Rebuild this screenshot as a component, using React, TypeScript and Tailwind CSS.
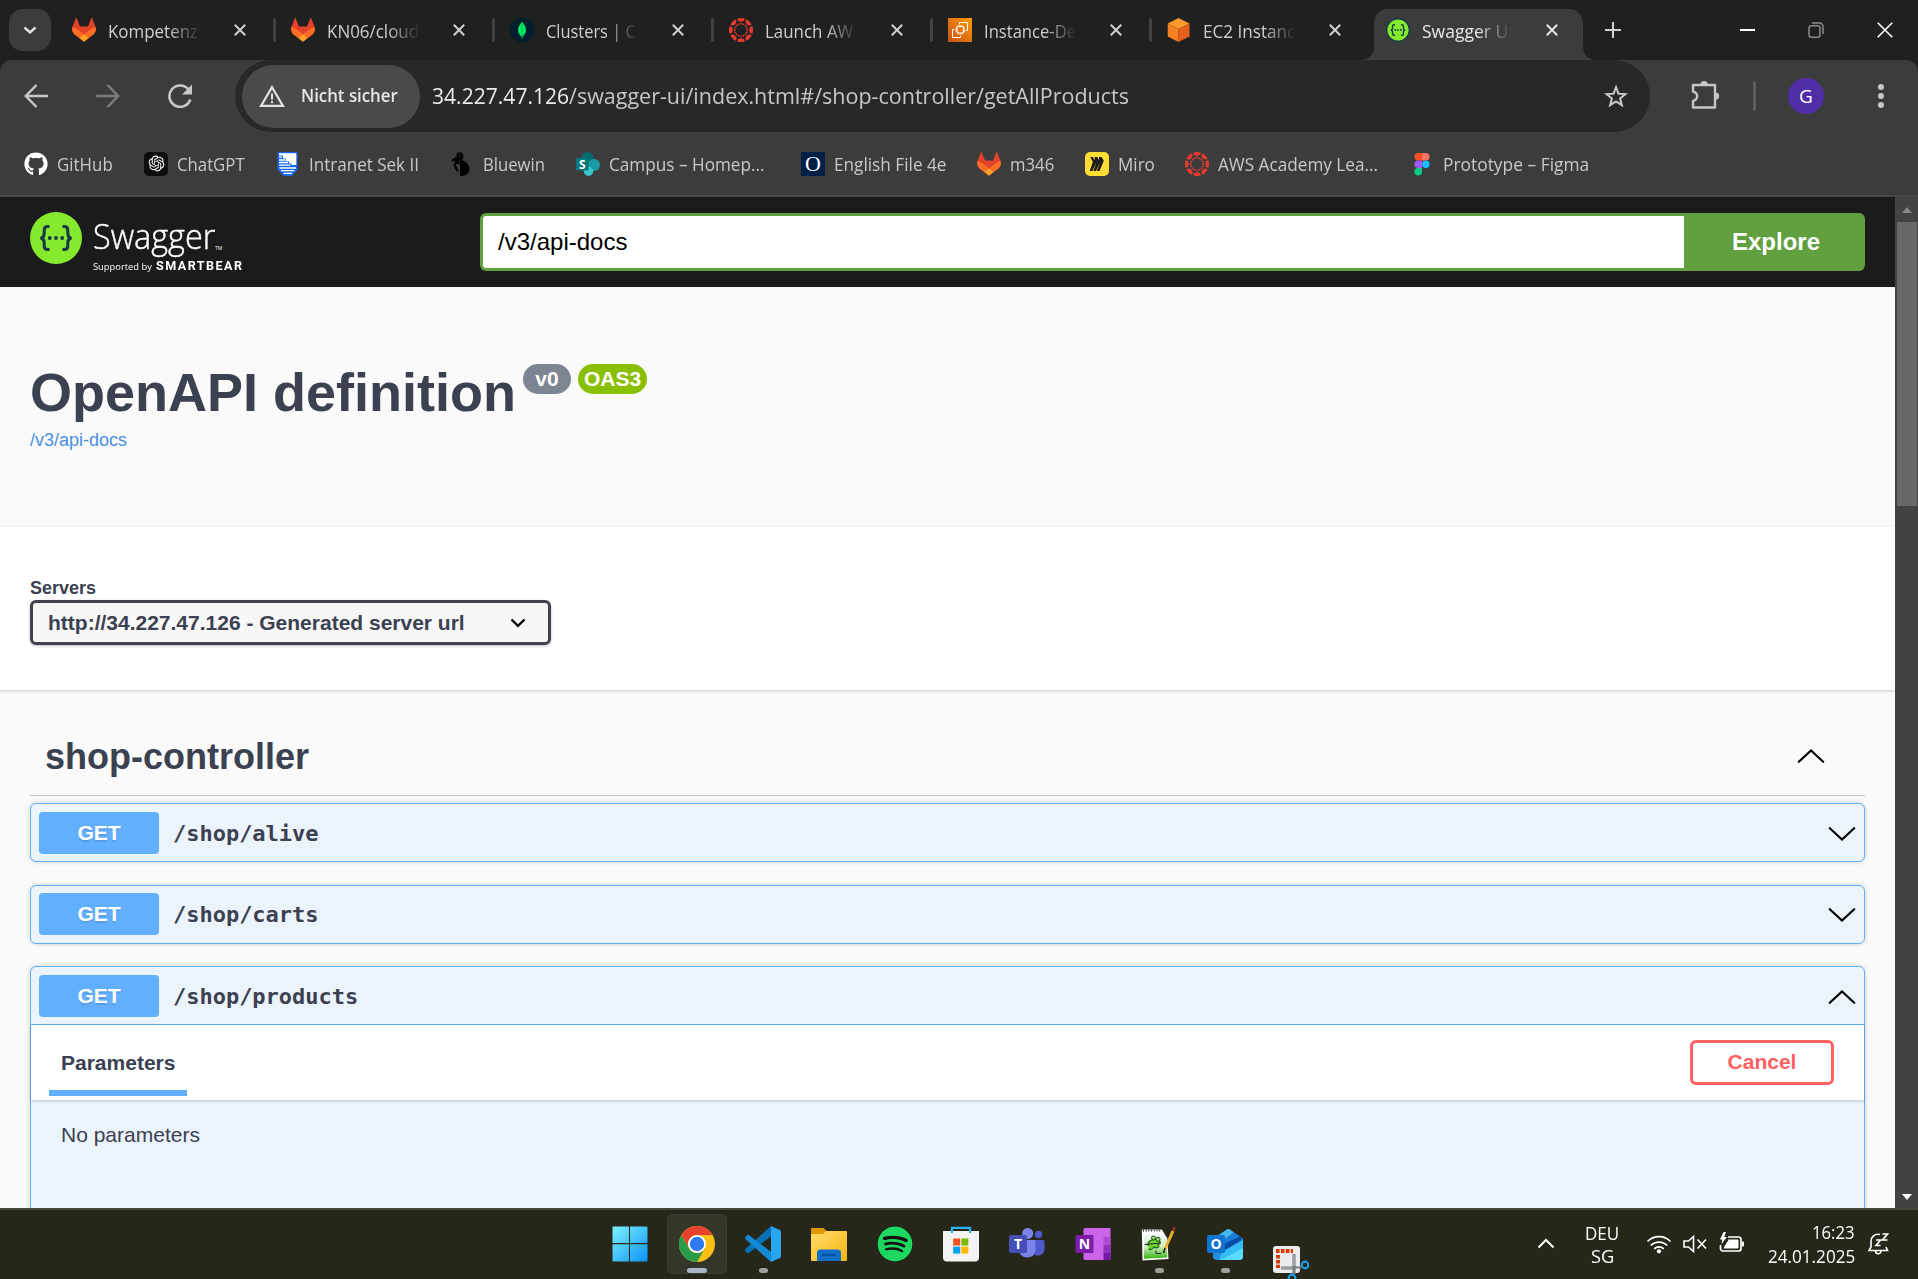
import React, { useLayoutEffect, useRef, useState } from "react";
import { FaGithub, FaSpotify } from "react-icons/fa";
import { RiOpenaiFill } from "react-icons/ri";

/* Text squeezed horizontally so that it fills exactly `w` pixels. */
function Fit({ w, children, className = "" }: { w: number; children: React.ReactNode; className?: string }) {
  const ref = useRef<HTMLSpanElement>(null);
  const [scale, setScale] = useState(1);
  useLayoutEffect(() => {
    if (ref.current) setScale(w / ref.current.offsetWidth);
  }, [w]);
  return (
    <span className={`inline-block shrink-0 whitespace-nowrap ${className}`} style={{ width: w }}>
      <span ref={ref} className="inline-block origin-left" style={{ transform: `scaleX(${scale})` }}>
        {children}
      </span>
    </span>
  );
}

/* ---------- favicons ---------- */
const Gitlab = () => (
  <svg viewBox="0 0 24 24" className="h-6 w-6 shrink-0">
    <path d="M4.7.3 8 8.6h8L19.300.3c.2-.4.7-.4.9 0l3.300 8.700c1 3-.1 6-2.400 7.800L12 23.700 2.900 16.800C.6 15-.5 12 .5 9L3.800.3c.2-.4.7-.4.9 0Z" fill="#e24329" />
    <path d="m23.500 9-.1-.1c-1.600.300-3 1-4.300 2L12 16.200l4.600 3.900 4.500-3.300C23.400 15 24.500 12 23.500 9ZM.5 9l.1-.1c1.600.300 3 1 4.300 2l7.100 5.300-4.600 3.900-4.500-3.300C.6 15-.5 12 .5 9Z" fill="#fc6d26" />
    <path d="m12 16.200 4.600 3.700L12 23.700l-4.600-3.800Z" fill="#fca326" />
  </svg>
);

const Mongo = () => (
  <svg viewBox="0 0 24 24" className="h-6 w-6 shrink-0">
    <circle cx="12" cy="12" r="12" fill="#001e2b" />
    <path d="M12 3.500c-.5 1.500-3.900 4-3.900 8.500 0 3.500 2.300 5.900 3.500 6.800l.2 2.200h.5l.2-2.200c1.200-1 3.500-3.200 3.500-6.800 0-4.500-3.400-7-4-8.500Z" fill="#00ed64" />
    <path d="M12 5v14" stroke="#00a64b" strokeWidth=".8" />
  </svg>
);

const CANVAS_ANGLES = [0, 45, 90, 135, 180, 225, 270, 315];
const Canvas = () => (
  <svg viewBox="0 0 24 24" className="h-6 w-6 shrink-0" fill="#ea3a2f">
    {CANVAS_ANGLES.map((a) => (
      <g key={a} transform={`rotate(${a} 12 12)`}>
        <path d="M8.300.6a12 12 0 0 1 7.400 0 3.700 3.200 0 0 1-7.400 0Z" />
        <circle cx="12" cy="5.700" r=".9" />
      </g>
    ))}
    {CANVAS_ANGLES.map((a) => (
      <circle key={a} cx="12" cy="5.800" r=".9" transform={`rotate(${a + 22.5} 12 12)`} />
    ))}
  </svg>
);

const Ec2 = () => (
  <svg viewBox="0 0 24 24" className="h-6 w-6 shrink-0" fill="none">
    <defs>
      <linearGradient id="ec2" x1="0" y1="1" x2="1" y2="0">
        <stop stopColor="#c8511b" />
        <stop offset="1" stopColor="#f90" />
      </linearGradient>
    </defs>
    <path d="M0 0h24v24H0z" fill="url(#ec2)" />
    <path d="M11.500 6.500V4.500H19.500V12.500H17.500M6.500 11.500H4.500v8H12.500V17.500" stroke="#fff" strokeWidth="1" />
    <rect x="9" y="8.500" width="6.500" height="6.500" rx=".8" stroke="#fff" strokeWidth="1.200" />
    <path d="M10.700 8.500V7M12.300 8.500V7M13.900 8.500V7M10.700 16.500V15M12.300 16.500V15M13.900 16.500V15M7.500 10.200H9M7.500 11.800H9M7.500 13.400H9M15.500 10.200H17M15.500 11.800H17M15.500 13.400H17" stroke="#fff" strokeWidth=".8" />
  </svg>
);

const Cube = () => (
  <svg viewBox="0 0 24 24" className="h-6 w-6 shrink-0">
    <path d="M11.500 0 22.500 5.500 11.500 11 .7 5.500Z" fill="#fb9a2a" />
    <path d="M.7 5.500 11.500 11V24L.7 18.500Z" fill="#f58220" />
    <path d="M22.500 5.500 11.500 11V24l11-5.500Z" fill="#e65f1c" />
  </svg>
);

const SwaggerMark = ({ className, ring }: { className: string; ring?: boolean }) => (
  <svg viewBox="0 0 52 52" className={className} fill="none">
    <circle cx="26" cy="26" r={ring ? 24.500 : 26} fill="#85ea2d" stroke={ring ? "#173647" : "none"} strokeWidth={ring ? 3 : 0} />
    <g stroke="#173647" strokeWidth="3">
      <path d="M19.500 14.500h-1.700c-2.500 0-3.600 1.300-3.600 3.600v3.400c0 2.600-.9 4.100-3.700 4.500 2.800.4 3.700 1.900 3.700 4.500v3.400c0 2.300 1.100 3.600 3.600 3.600h1.700" />
      <path d="M32.500 14.500h1.700c2.500 0 3.600 1.300 3.600 3.600v3.400c0 2.600.9 4.100 3.700 4.500-2.800.4-3.700 1.900-3.700 4.500v3.400c0 2.300-1.100 3.600-3.600 3.600h-1.700" />
    </g>
    <g fill="#173647">
      <circle cx="19.800" cy="26" r="1.900" />
      <circle cx="26" cy="26" r="1.900" />
      <circle cx="32.200" cy="26" r="1.900" />
    </g>
  </svg>
);

const CloseX = ({ light }: { light?: boolean }) => (
  <svg viewBox="0 0 12 12" className="h-3 w-3 shrink-0" fill="none">
    <path d="m.8.8 10.400 10.400M11.200.8.800 11.200" stroke={light ? "#e3e3e3" : "#d0d0d0"} strokeWidth="2" />
  </svg>
);

/* ---------- tab strip ---------- */
const tabs = [
  { icon: <Gitlab />, label: "Kompetenz", w: 90 },
  { icon: <Gitlab />, label: "KN06/cloud", w: 92 },
  { icon: <Mongo />, label: "Clusters | C", w: 90 },
  { icon: <Canvas />, label: "Launch AW", w: 88 },
  { icon: <Ec2 />, label: "Instance-De", w: 92 },
  { icon: <Cube />, label: "EC2 Instanc", w: 92 },
];

function TabStrip() {
  return (
    <div className="flex h-[60px] shrink-0 bg-[#1f2120]">
      <div className="w-[55px] shrink-0 pt-[9px] pl-[9px]">
        <div className="flex h-[42px] w-[42px] items-center justify-center rounded-[14px] bg-[#3c3c3c]">
          <svg viewBox="0 0 14 9" className="h-[9px] w-[14px]" fill="none">
            <path d="m1.500 1.500 5.500 5 5.500-5" stroke="#e3e3e3" strokeWidth="2.400" />
          </svg>
        </div>
      </div>
      {tabs.map((t, i) => (
        <div key={i} className="flex h-[60px] w-[219px] shrink-0 items-center pl-[17px]">
          {t.icon}
          <div className="ml-3 w-[93px] shrink-0 pt-[2px] text-[17.500px] leading-6 text-[#cfcfcf] [mask-image:linear-gradient(to_right,#000_60px,transparent_93px)]">
            <Fit w={t.w}>{t.label}</Fit>
          </div>
          <div className="ml-[33px] flex w-3 shrink-0">
            <CloseX />
          </div>
          {i < 5 && <div className="mr-[-3px] ml-[27px] h-6 w-[3px] shrink-0 rounded bg-[#424242]" />}
        </div>
      ))}
      <div className="relative flex h-[60px] w-[219px] shrink-0 items-center pl-[17px]">
        <svg viewBox="0 0 236 51" className="absolute top-[9px] left-[-9px] h-[51px] w-[236px]" fill="#3c3c3c">
          <path d="M0 51c9 0 14-6 14-14V15C14 6 20 0 28 0h181c8 0 14 6 14 15v22c0 8 5 14 13 14Z" />
        </svg>
        <SwaggerMark ring className="relative h-6 w-6 shrink-0" />
        <div className="relative ml-3 w-[92px] shrink-0 pt-[2px] text-[17.500px] leading-6 text-[#e8e8e8] [mask-image:linear-gradient(to_right,#000_55px,transparent_90px)]">
          <Fit w={91}>Swagger UI</Fit>
        </div>
        <div className="relative ml-[32px] flex w-3 shrink-0">
          <CloseX light />
        </div>
      </div>
      <div className="flex flex-1 items-center">
        <svg viewBox="0 0 16 16" className="ml-[17px] h-4 w-4" fill="none">
          <path d="M8 0v16M0 8h16" stroke="#d0d0d0" strokeWidth="2" />
        </svg>
        <div className="mt-[-1px] ml-[119px] h-[2px] w-[15px] bg-white" />
        <svg viewBox="0 0 16 16" className="ml-[53px] h-4 w-4" fill="none" stroke="#8a8a8a" strokeWidth="1.500">
          <rect x="1" y="3.800" width="11" height="11.400" rx="2.200" />
          <path d="M4 1h7.500A3.500 3.500 0 0 1 15 4.500V12" />
        </svg>
        <svg viewBox="0 0 16 16" className="ml-[53px] h-4 w-4" fill="none">
          <path d="m.7.7 14.600 14.600M15.300.7.700 15.300" stroke="#fff" strokeWidth="1.600" />
        </svg>
      </div>
    </div>
  );
}

/* ---------- toolbar ---------- */
function Toolbar() {
  return (
    <div className="shrink-0 bg-[#1f2120]">
      <div className="flex h-[72px] items-center rounded-t-[12px] bg-[#3c3c3c]">
        <svg viewBox="0 0 24 24" className="ml-6 h-6 w-6" fill="none" stroke="#c7c7c7" strokeWidth="2.500">
          <path d="M24 12H2M12.500 1 1.800 12l10.700 11" />
        </svg>
        <svg viewBox="0 0 24 24" className="ml-12 h-6 w-6" fill="none" stroke="#7c7c7c" strokeWidth="2.500">
          <path d="M0 12h22M11.500 1l10.700 11-10.700 11" />
        </svg>
        <svg viewBox="0 0 24 24" className="ml-12 h-6 w-6" fill="none">
          <path d="M22.300 15.500A10.700 10.700 0 1 1 20.500 5.500" stroke="#c7c7c7" strokeWidth="2.600" />
          <path d="M24 .5V10.500H14Z" fill="#c7c7c7" />
        </svg>
        <div className="ml-[43px] flex h-[72px] w-[1415px] items-center rounded-full bg-[#282828] pl-[7px]">
          <div className="flex h-[63px] w-[178px] items-center rounded-full bg-[#4a4a4a] pl-[17px]">
            <svg viewBox="0 0 26 24" className="h-6 w-[26px]" fill="none">
              <path d="M13 3.200 24 21.900H2Z" stroke="#e3e3e3" strokeWidth="2.200" />
              <path d="M13 9.500v6M13 17v2.300" stroke="#e3e3e3" strokeWidth="2" />
            </svg>
            <Fit w={97} className="mt-[-1px] ml-4 text-[17.500px] font-semibold text-[#e8e8e8]">Nicht sicher</Fit>
          </div>
          <Fit w={137} className="mt-[-2px] ml-3 text-[22px] leading-8 text-[#ececec]">34.227.47.126</Fit>
          <Fit w={560} className="mt-[-2px] text-[22px] leading-8 text-[#c7c7c7]">/swagger-ui/index.html#/shop-controller/getAllProducts</Fit>
          <svg viewBox="0 0 24 24" className="ml-auto mr-[22px] h-6 w-6" fill="none" stroke="#c7c7c7" strokeWidth="2">
            <path d="m12 3.200 2.500 6.500 7 .4-5.400 4.400 1.800 6.700-5.900-3.800-5.900 3.800 1.800-6.700L2.500 10.100l7-.4Z" />
          </svg>
        </div>
        <svg viewBox="0 0 30 30" className="mt-[-2px] ml-[40px] h-[30px] w-[30px]" fill="none">
          <path d="M3 5h22v22.500H3v-6.500c5.500-1.500 5.500-8 0-9.500Z" stroke="#c7c7c7" strokeWidth="2.400" strokeLinejoin="round" />
          <path d="M10.500 4.500a3.600 3.600 0 0 1 7.200 0ZM25.500 12.400a3.700 3.700 0 0 1 0 7.400Z" fill="#c7c7c7" />
        </svg>
        <div className="ml-[33px] h-[30px] w-[3px] rounded bg-[#5e5e5e]" />
        <div className="ml-[32px] flex h-9 w-9 items-center justify-center rounded-full bg-[#512da8] text-[19px] text-white">G</div>
        <svg viewBox="0 0 6 24" className="ml-[54px] h-6 w-[6px]" fill="#c7c7c7">
          <circle cx="3" cy="3" r="3" />
          <circle cx="3" cy="12" r="3" />
          <circle cx="3" cy="21" r="3" />
        </svg>
      </div>
      <Bookmarks />
    </div>
  );
}

const bookmarks = [
  { label: "GitHub", w: 56, gap: "mr-[31px]", icon: <FaGithub className="h-6 w-6 text-white" /> },
  {
    label: "ChatGPT", w: 68, gap: "mr-[31px]",
    icon: (
      <div className="flex h-6 w-6 items-center justify-center rounded-[5px] bg-[#0d0d0d]">
        <RiOpenaiFill className="h-[19px] w-[19px] text-white" />
      </div>
    ),
  },
  {
    label: "Intranet Sek II", w: 110, gap: "mr-[31px]",
    icon: (
      <svg viewBox="0 0 24 24" className="h-6 w-6">
        <path d="M1.500 0h20v17.500L16 24H7.500L1.500 17.500Z" fill="#1767ea" />
        <path d="M3 1.200h17.300V13H15.500v-1.600H13V9.300H10V6.500H7V3.500H3Z" fill="#fff" />
        <path d="M3 5.200h3M3 8h6.500M3 10.500h9M3 13.200h11.500M3.500 16h16.500M5 18.700h13.500M7.500 21.400h8.500" stroke="#fff" strokeWidth="1.300" />
      </svg>
    ),
  },
  {
    label: "Bluewin", w: 62, gap: "mr-[31px]",
    icon: (
      <svg viewBox="0 0 24 24" className="h-6 w-6" fill="#000">
        <path d="M9.500.3C7 .8 6 2.500 6.600 5 3.500 5.500 1.200 8 1.500 9.500L5.500 9 3.500 13c.8 1.500 1.200 4.500 3.500 6.500l2-.3-1.500-3-2-3.500 2.500-1.500L9.500 13V.3Z" />
        <path d="M10 0v24c6 .3 9.500-2.800 9.500-7 0-3-1.700-5.500-4.300-7.300C13.800 8.800 12.500 8.300 12 7.500 14.500 5 13.500 1 10 0Z" />
        <path d="M9.500 5.500 6.500 9 8 12" stroke="#000" strokeWidth="1.500" fill="none" />
      </svg>
    ),
  },
  {
    label: "Campus – Homep...", w: 156, gap: "mr-[36px]",
    icon: (
      <svg viewBox="0 0 24 24" className="h-6 w-6">
        <circle cx="11.500" cy="6.500" r="6.500" fill="#036c70" />
        <circle cx="18" cy="13" r="6" fill="#1a9ba1" />
        <circle cx="12.500" cy="19.300" r="4.700" fill="#37c6d0" />
        <rect y="6" width="12.500" height="12.500" rx="1" fill="#03787c" />
        <text x="6.200" y="16.500" textAnchor="middle" fill="#fff" fontSize="12" fontWeight="700" fontFamily="Open Sans, sans-serif">S</text>
      </svg>
    ),
  },
  {
    label: "English File 4e", w: 113, gap: "mr-[30px]",
    icon: (
      <div className="flex h-6 w-6 items-center justify-center bg-[#001f47] font-['Liberation_Serif',serif] text-[22px] leading-6 text-white">O</div>
    ),
  },
  { label: "m346", w: 44, gap: "mr-[31px]", icon: <Gitlab /> },
  {
    label: "Miro", w: 37, gap: "mr-[30px]",
    icon: (
      <svg viewBox="0 0 24 24" className="h-6 w-6">
        <rect width="24" height="24" rx="5" fill="#ffdd33" />
        <path d="M5.200 5h2.600l2 3.500L9.600 5h2.600l1.900 3.200L13.900 5h2.600l2.300 3.800L14.500 19h-2.600l3.300-9.200L11 19H8.400l3.200-9.200L7.400 19H4.800l3.100-9.200Z" fill="#1a1a1a" />
      </svg>
    ),
  },
  { label: "AWS Academy Lea...", w: 160, gap: "mr-[32px]", icon: <Canvas /> },
  {
    label: "Prototype – Figma", w: 146, gap: "",
    icon: (
      <svg viewBox="0 0 24 24" className="h-6 w-6">
        <path d="M12 1H8.200a3.700 3.700 0 0 0 0 7.500H12Z" fill="#f24e1e" />
        <path d="M12 1h3.800a3.700 3.700 0 0 1 0 7.500H12Z" fill="#ff7262" />
        <path d="M12 8.500H8.200a3.700 3.700 0 0 0 0 7.500H12Z" fill="#a259ff" />
        <circle cx="15.800" cy="12.300" r="3.750" fill="#1abcfe" />
        <path d="M8.200 16H12v3.800A3.800 3.800 0 1 1 8.200 16Z" fill="#0acf83" />
      </svg>
    ),
  },
];

function Bookmarks() {
  return (
    <div className="flex h-[65px] items-center border-b-2 border-[#484848] bg-[#3c3c3c] pl-6">
      {bookmarks.map((b) => (
        <div key={b.label} className={`flex shrink-0 items-center gap-[9px] ${b.gap}`}>
          {b.icon}
          <Fit w={b.w} className="text-[17.500px] leading-6 text-[#c9c9c9]">{b.label}</Fit>
        </div>
      ))}
    </div>
  );
}

/* ---------- Swagger page ---------- */
const Chevron = ({ up, className = "" }: { up?: boolean; className?: string }) => (
  <svg viewBox="0 0 28 16" className={`h-4 w-7 shrink-0 ${className}`} fill="none">
    <path d={up ? "M1.800 13.800 14 2.500l12.200 11.300" : "M1.800 2.200 14 13.500 26.200 2.200"} stroke="#000" strokeWidth="2.200" strokeLinecap="round" />
  </svg>
);

function Summary({ path, up, className }: { path: string; up?: boolean; className: string }) {
  return (
    <div className={`flex items-start pr-[8px] pl-2 ${className}`}>
      <div className="flex h-[42px] w-[120px] items-center justify-center rounded-[4px] bg-[#61affe] text-[21px] leading-6 font-bold text-white [text-shadow:0_1.500px_0_rgba(0,0,0,0.1)]">
        GET
      </div>
      <div className="ml-[14px] pt-px font-['DejaVu_Sans_Mono',monospace] text-[22px] leading-[42px] font-bold tracking-[-0.020px] text-[#3b4151]">
        {path}
      </div>
      <Chevron up={up} className="mt-[14px] ml-auto" />
    </div>
  );
}

const blockBase = "border border-[#61affe] bg-[#ebf3fb] shadow-[0_0_4px_rgba(0,0,0,0.19)]";

function SwaggerPage() {
  return (
    <div className="min-w-0 flex-1 overflow-hidden bg-[#fafafa] font-['Liberation_Sans',Arial,sans-serif] text-[#3b4151]">
      <header className="flex h-[90px] items-start bg-[#1b1b1b] pt-[15px] pl-[30px]">
        <SwaggerMark className="h-[52px] w-[52px]" />
        <div className="ml-[11px] w-[387px] font-['Open_Sans',sans-serif] text-white">
          <div className="flex items-end pt-[3px]">
            <Fit w={122} className="h-[42px] text-[34px] leading-[42px] font-light [-webkit-text-stroke:0.400px_#fff]">Swagger</Fit>
            <span className="mb-[3px] text-[5px] leading-3">TM</span>
          </div>
          <div className="mt-px flex items-baseline">
            <Fit w={59} className="mr-[4px] text-[9.500px] leading-4">Supported by</Fit>
            <Fit w={87} className="font-['Roboto',sans-serif] text-[13px] leading-4 font-bold tracking-[1.500px]">SMARTBEAR</Fit>
          </div>
        </div>
        <div className="mt-px flex h-[58px] w-[1385px]">
          <div className="flex flex-1 items-center rounded-l-[6px] border-3 border-r-0 border-[#62a03f] bg-white pl-[15px] text-[24px] text-black">
            /v3/api-docs
          </div>
          <div className="flex w-[181px] items-center justify-center rounded-r-[6px] bg-[#62a03f] pl-[3px] text-[24px] font-bold text-white">
            Explore
          </div>
        </div>
      </header>

      <section className="h-[240px] pt-[74px] pl-[30px]">
        <div className="flex items-start">
          <h1 className="w-[493px] text-[54px] leading-[62px] font-bold whitespace-nowrap">OpenAPI definition</h1>
          <span className="mt-[3px] flex h-[30px] w-12 items-center justify-center rounded-full bg-[#7d8492] text-[21px] font-bold text-white">v0</span>
          <span className="mt-[3px] ml-[7px] flex h-[30px] w-[69px] items-center justify-center rounded-full bg-[#89bf04] text-[21px] font-bold text-white">OAS3</span>
        </div>
        <div className="mt-[7px] text-[18px] leading-5 text-[#4990e2]">/v3/api-docs</div>
      </section>

      <section className="h-[163px] bg-white pt-[51px] pl-[30px] shadow-[0_1px_3px_rgba(0,0,0,0.2)]">
        <div className="text-[18px] leading-5 font-bold">Servers</div>
        <div className="mt-[2px] flex h-[45px] w-[521px] items-center rounded-[6px] border-3 border-[#41444e] bg-[#f7f7f7] pr-[22px] pl-[15px] text-[21px] font-bold shadow-[0_1px_3px_rgba(0,0,0,0.25)]">
          http://34.227.47.126 - Generated server url
          <svg viewBox="0 0 16 10" className="ml-auto h-[10px] w-4" fill="none">
            <path d="m1.500 1.500 6.500 6.300 6.500-6.300" stroke="#000" strokeWidth="2.300" />
          </svg>
        </div>
      </section>

      <section className="px-[30px]">
        <div className="flex h-[106px] items-center border-b border-[#c1c3c8] pt-[28px] pr-[40px] pl-[15px]">
          <h2 className="text-[36px] leading-[44px] font-bold">shop-controller</h2>
          <Chevron up className="mt-[-2px] ml-auto" />
        </div>
        <div className={`mt-[7px] h-[59px] rounded-[6px] ${blockBase}`}>
          <Summary path="/shop/alive" className="pt-[8px]" />
        </div>
        <div className={`mt-[23px] h-[59px] rounded-[6px] ${blockBase}`}>
          <Summary path="/shop/carts" className="pt-[7px]" />
        </div>
        <div className={`mt-[22px] h-[300px] rounded-t-[6px] ${blockBase}`}>
          <Summary path="/shop/products" up className="h-[58px] border-b border-[#61affe] pt-[8px]" />
          <div className="flex h-[75px] items-center justify-between bg-[#fdfeff] pr-[30px] pl-[18px] shadow-[0_1px_3px_rgba(0,0,0,0.2)]">
            <div className="mt-auto mb-1 flex h-[45px] w-[138px] flex-col border-b-6 border-[#61affe] pl-3 text-[21px] leading-6 font-bold">
              <div>Parameters</div>
            </div>
            <div className="flex h-[45px] w-[144px] items-center justify-center rounded-[6px] border-3 border-[#ff6060] pb-px text-[21px] leading-6 font-bold text-[#ff6060]">
              Cancel
            </div>
          </div>
          <div className="pt-[23px] pl-[30px] text-[21px] leading-6">No parameters</div>
        </div>
      </section>
    </div>
  );
}

function Scrollbar() {
  return (
    <div className="flex w-[23px] shrink-0 flex-col items-center bg-[#424242]">
      <svg viewBox="0 0 10 6" className="mt-[10px] h-[6px] w-[10px]" fill="#868686">
        <path d="M5 0l5 6H0Z" />
      </svg>
      <div className="mt-[9px] h-[284px] w-5 bg-[#686868]" />
      <svg viewBox="0 0 10 6" className="mt-auto mb-2 h-[6px] w-[10px]" fill="#fff">
        <path d="M0 0h10L5 6Z" />
      </svg>
    </div>
  );
}

/* ---------- taskbar ---------- */
const Windows = () => (
  <svg viewBox="0 0 36 36" className="h-9 w-9">
    <defs>
      <linearGradient id="win" x1="0" y1="0" x2="36" y2="36" gradientUnits="userSpaceOnUse">
        <stop stopColor="#7df4ff" />
        <stop offset="1" stopColor="#0a90f5" />
      </linearGradient>
    </defs>
    <g fill="url(#win)">
      <path d="M1.500.5H17V17H.5V1.500a1 1 0 0 1 1-1ZM18 .5H34.500a1 1 0 0 1 1 1V17H18ZM.5 18.200H17V35.500H1.500a1 1 0 0 1-1-1ZM18 18.200H35.500V34.500a1 1 0 0 1-1 1H18Z" />
    </g>
  </svg>
);

const Chrome = () => (
  <svg viewBox="0 0 36 36" className="h-9 w-9">
    <circle cx="18" cy="18" r="18" fill="#fbbf16" />
    <path d="M2.400 9A18 18 0 0 1 33.600 9H18a9 9 0 0 0-7.800 13.500Z" fill="#e8412f" />
    <path d="M2.400 9A18 18 0 0 0 18 36l7.800-13.500a9 9 0 0 1-15.600 0Z" fill="#2a9c48" />
    <circle cx="18" cy="18" r="9" fill="#fff" />
    <circle cx="18" cy="18" r="7.200" fill="#2f7af0" />
  </svg>
);

const VsCode = () => (
  <svg viewBox="0 0 36 36" className="h-9 w-9">
    <path d="M26 0v10.200L4.200 26.700a2 2 0 0 1-2.500-.1L.6 25.300a1.800 1.800 0 0 1 0-2.500Z" fill="#0670b5" />
    <path d="M26 36V25.800L4.200 9.300a2 2 0 0 0-2.500.1L.6 10.700a1.800 1.800 0 0 0 0 2.500Z" fill="#1488d2" />
    <path d="M26 0l8.800 4c.8.400 1.200 1 1.200 1.800v24.400c0 .8-.4 1.400-1.200 1.800L26 36Z" fill="#29a4f0" />
  </svg>
);

const Folder = () => (
  <svg viewBox="0 0 36 34" className="h-[34px] w-9">
    <defs>
      <linearGradient id="fold" x1="0" y1="0" x2="1" y2="1">
        <stop stopColor="#ffdc6e" />
        <stop offset="1" stopColor="#f8b70f" />
      </linearGradient>
    </defs>
    <path d="M0 8V2a1 1 0 0 1 1-1h10.500c1 0 1.500.5 2 1L16 4v4Z" fill="#df9700" />
    <path d="M0 7h11.500c1.500 0 2.500-3 4-3H35a1 1 0 0 1 1 1v28a1 1 0 0 1-1 1H1a1 1 0 0 1-1-1Z" fill="url(#fold)" />
    <path d="M6 34V26a3.500 3.500 0 0 1 3.500-3.500h17A3.500 3.500 0 0 1 30 26v8Z" fill="#0f6fc8" />
    <path d="M11 28h14" stroke="#064a94" strokeWidth="1.600" />
  </svg>
);

const Store = () => (
  <svg viewBox="0 0 36 36" className="h-9 w-9">
    <path d="M9 8V1.800h18V8" stroke="#28b4ee" strokeWidth="2.200" fill="none" />
    <path d="M0 5h36v26.500a4 4 0 0 1-4 4H4a4 4 0 0 1-4-4Z" fill="#f3f3f3" />
    <path d="M9 7V5M27 7V5" stroke="#28b4ee" strokeWidth="2.200" />
    <path d="M10.200 12.500h7v7h-7z" fill="#f15022" />
    <path d="M18.300 12.500h7v7h-7z" fill="#7db900" />
    <path d="M10.200 20.600h7v7h-7z" fill="#00a3ef" />
    <path d="M18.300 20.600h7v7h-7z" fill="#ffb800" />
  </svg>
);

const Teams = () => (
  <svg viewBox="0 0 36 36" className="h-9 w-9">
    <circle cx="29.500" cy="8.500" r="3.700" fill="#5059c9" />
    <path d="M22 14h12a1.500 1.500 0 0 1 1.500 1.500V23c0 4-3 6.500-6.500 6.500S22 27 22 23Z" fill="#5059c9" />
    <circle cx="18.700" cy="7.500" r="5.500" fill="#7b83eb" />
    <path d="M10 14h15a1.500 1.500 0 0 1 1.500 1.500V25A8.500 8.500 0 0 1 10 25Z" fill="#7b83eb" />
    <rect y="9" width="18" height="18" rx="1.500" fill="#464eb8" />
    <text x="9" y="23" textAnchor="middle" fill="#fff" fontSize="14" fontWeight="700" fontFamily="Open Sans, sans-serif">T</text>
  </svg>
);

const OneNote = () => (
  <svg viewBox="0 0 36 36" className="h-9 w-9">
    <path d="M10 2h24.500a1 1 0 0 1 1 1v30a1 1 0 0 1-1 1H10a1.500 1.500 0 0 1-1.500-1.500v-29A1.500 1.500 0 0 1 10 2Z" fill="#ca64ea" />
    <path d="M28.500 11h7v8h-7z" fill="#ae4bd5" />
    <path d="M28.500 19h7v7.500h-7z" fill="#9332bf" />
    <path d="M28.500 26.500h7V33a1 1 0 0 1-1 1h-6Z" fill="#7719aa" />
    <rect x=".5" y="9" width="18" height="18" rx="1.500" fill="#7b1fa8" />
    <text x="9.500" y="23" textAnchor="middle" fill="#fff" fontSize="14" fontWeight="700" fontFamily="Open Sans, sans-serif">N</text>
  </svg>
);

const Notepad = () => (
  <svg viewBox="0 0 36 36" className="h-9 w-9">
    <defs>
      <linearGradient id="npp" x1="0" y1="0" x2="0" y2="1">
        <stop stopColor="#eef6fa" />
        <stop offset=".5" stopColor="#cfeec0" />
        <stop offset="1" stopColor="#35b511" />
      </linearGradient>
    </defs>
    <path d="M.8 3.500h20l5.500 9L27.500 33 1.500 34.500Z" fill="#fff" />
    <path d="M2.500 8.500h20L25.800 14l.5 17.500L3 32.800Z" fill="url(#npp)" />
    <path d="M2 4.500h18" stroke="#222" strokeWidth="2.200" strokeDasharray="1 1.700" />
    <path d="M7 20c-1-5 4-7 9-6.500 4 .5 4 4 1 5.500 3 2-2 4-4 2-2 3-5 4-5 1" fill="#6bd42f" stroke="#1a5a10" strokeWidth="1.100" />
    <circle cx="12.500" cy="12" r="2" fill="#9be36c" stroke="#153f0d" strokeWidth=".9" />
    <circle cx="17" cy="13.300" r="2" fill="#9be36c" stroke="#153f0d" strokeWidth=".9" />
    <path d="M3.500 18.500 20 17M15 24.500v3h5" stroke="#222" strokeWidth="1" fill="none" />
    <path d="M32 5 24 23" stroke="#efb02c" strokeWidth="3" />
    <path d="M33.500 1.500 32 5" stroke="#a52a3a" strokeWidth="2.500" />
    <path d="m24 22-1.500 5" stroke="#222" strokeWidth="1.500" />
  </svg>
);

const Outlook = () => (
  <svg viewBox="0 0 36 36" className="h-9 w-9">
    <path d="M6 13 20 3.500a2.500 2.500 0 0 1 2.600 0L36 12.500V30a4 4 0 0 1-4 4H10a4 4 0 0 1-4-4Z" fill="#2190e0" />
    <path d="M7 12 20 3.500a2.500 2.500 0 0 1 2.600 0L27 6.500 11 17Z" fill="#46b5ee" />
    <path d="M27 6.500 33 10.500 15 22V15Z" fill="#1b7cd6" />
    <path d="M33 10.500c2 1.300 2.500 2 1 3.700L17 25l-2-6Z" fill="#0a4aa6" />
    <path d="M36 14v16a4 4 0 0 1-4 4H12l3-8Z" fill="#35bdf5" />
    <path d="M36 22v8a4 4 0 0 1-4 4H14Z" fill="#58dcfd" />
    <rect y="9" width="18" height="18" rx="1.800" fill="#0f75cf" />
    <text x="9" y="23" textAnchor="middle" fill="#fff" fontSize="14" fontWeight="700" fontFamily="Open Sans, sans-serif">O</text>
  </svg>
);

const Snip = () => (
  <svg viewBox="0 0 36 36" className="h-9 w-9">
    <rect width="27" height="27" rx="3" fill="#ececee" />
    <path d="M3 5h17M5 9v13" stroke="#d83b01" strokeWidth="4" strokeDasharray="3.600 1.300" />
    <path d="M21 8v14H8" stroke="#9a9ea3" strokeWidth="3.500" fill="none" />
    <path d="M21 20v8" stroke="#777d84" strokeWidth="3" />
    <path d="M21 21.500h7" stroke="#777d84" strokeWidth="2" />
    <circle cx="32" cy="19" r="3.300" stroke="#1b9de2" strokeWidth="2.200" fill="none" />
    <circle cx="19" cy="32" r="3.300" stroke="#1b9de2" strokeWidth="2.200" fill="none" />
  </svg>
);

const apps = [
  { el: <Windows />, mark: "" },
  { el: <Chrome />, mark: "w-5 bg-[#a9b6c6]" },
  { el: <VsCode />, mark: "w-[9px] bg-[#a0a09a]" },
  { el: <Folder />, mark: "" },
  { el: <FaSpotify className="h-9 w-9 rounded-full bg-[#111] text-[#1ed760]" />, mark: "" },
  { el: <Store />, mark: "" },
  { el: <Teams />, mark: "" },
  { el: <OneNote />, mark: "" },
  { el: <Notepad />, mark: "w-[9px] bg-[#a0a09a]" },
  { el: <Outlook />, mark: "w-[9px] bg-[#a0a09a]" },
];

function Taskbar() {
  return (
    <div className="flex h-[71px] shrink-0 overflow-hidden border-t-2 border-[#45463e] bg-[#262719] pl-[597px] text-white">
      {apps.map((a, i) => (
        <div
          key={i}
          className={`mt-1 flex h-[60px] w-[60px] shrink-0 flex-col items-center rounded-[6px] pt-3 ${i === 0 ? "mr-[4px] ml-[3px]" : "mx-[3px]"} ${i === 1 ? "bg-[#35362a] ring-1 ring-[#3d3e33] ring-inset" : ""}`}
        >
          <div className="flex h-9 items-center">{a.el}</div>
          {a.mark && <div className={`mt-[6px] h-[5px] rounded-full ${a.mark}`} />}
        </div>
      ))}
      <div className="mx-[3px] mt-9 flex w-[60px] shrink-0 justify-center">
        <Snip />
      </div>
      <div className="flex flex-1 items-start">
        <svg viewBox="0 0 18 11" className="mt-[28px] ml-[213px] h-[11px] w-[18px]" fill="none">
          <path d="m1.500 9.500 7.500-7.500 7.500 7.500" stroke="#fff" strokeWidth="2" />
        </svg>
        <div className="mt-[12px] ml-[30px] flex w-[34px] flex-col items-center text-[17.500px] leading-[23px]">
          <Fit w={34}>DEU</Fit>
          <Fit w={23}>SG</Fit>
        </div>
        <svg viewBox="0 0 26 20" className="mt-6 ml-[27px] h-5 w-[26px]" fill="none" stroke="#fff" strokeWidth="1.700">
          <path d="M1.500 7.500a16 16 0 0 1 23 0M4.800 11.500a11.500 11.500 0 0 1 16.400 0M8.200 14.800a7 7 0 0 1 9.600 0" />
          <circle cx="13" cy="17.300" r="2.100" fill="#fff" stroke="none" />
        </svg>
        <svg viewBox="0 0 24 18" className="mt-[25px] ml-[11px] h-[18px] w-6" fill="none" stroke="#fff" strokeWidth="1.600">
          <path d="M1 6h4.500L10.500 1.500v15L5.500 12H1ZM14.500 4.500l8.500 9M23 4.500l-8.500 9" />
        </svg>
        <svg viewBox="0 0 26 22" className="mt-[22px] ml-[12px] h-[22px] w-[26px]" fill="none">
          <path d="M9 5h10.500A2.500 2.500 0 0 1 22 7.500v9a2.500 2.500 0 0 1-2.500 2.500H4A2.500 2.500 0 0 1 1.500 16.500V13" stroke="#fff" strokeWidth="1.700" />
          <path d="M23 9.500h1a1 1 0 0 1 1 1v3a1 1 0 0 1-1 1h-1ZM9 7.500h9.500a1 1 0 0 1 1 1v7a1 1 0 0 1-1 1H4.500l1.500-3 3.500-5.500Z" fill="#fff" />
          <path d="M4.500 0 1 7.500h2.200L2.500 12l5.500-7H5.200L7 0Z" fill="#fff" />
        </svg>
        <div className="mt-[10px] ml-[20px] flex w-[90px] flex-col items-end text-[17.500px] leading-6">
          <Fit w={43}>16:23</Fit>
          <Fit w={87}>24.01.2025</Fit>
        </div>
        <svg viewBox="0 0 24 24" className="mt-[22px] ml-[12px] h-6 w-6" fill="none" stroke="#fff" strokeWidth="1.600">
          <path d="M13 2.500C7.500 1.500 4 5 4 9.500V15l-2 3.500h18.500l-1.500-3.500M8.500 19a2.600 2.600 0 0 0 5.500 0" />
          <path d="M9 8h4.500L9 13.500h4.500M15.500 2h5l-5 6h5" strokeWidth="1.700" />
        </svg>
      </div>
    </div>
  );
}

export default function App() {
  return (
    <div className="flex h-[1279px] w-[1918px] flex-col overflow-hidden bg-[#262719] font-['Open_Sans','Noto_Sans',sans-serif]">
      <TabStrip />
      <Toolbar />
      <div className="flex min-h-0 flex-1">
        <SwaggerPage />
        <Scrollbar />
      </div>
      <Taskbar />
    </div>
  );
}
